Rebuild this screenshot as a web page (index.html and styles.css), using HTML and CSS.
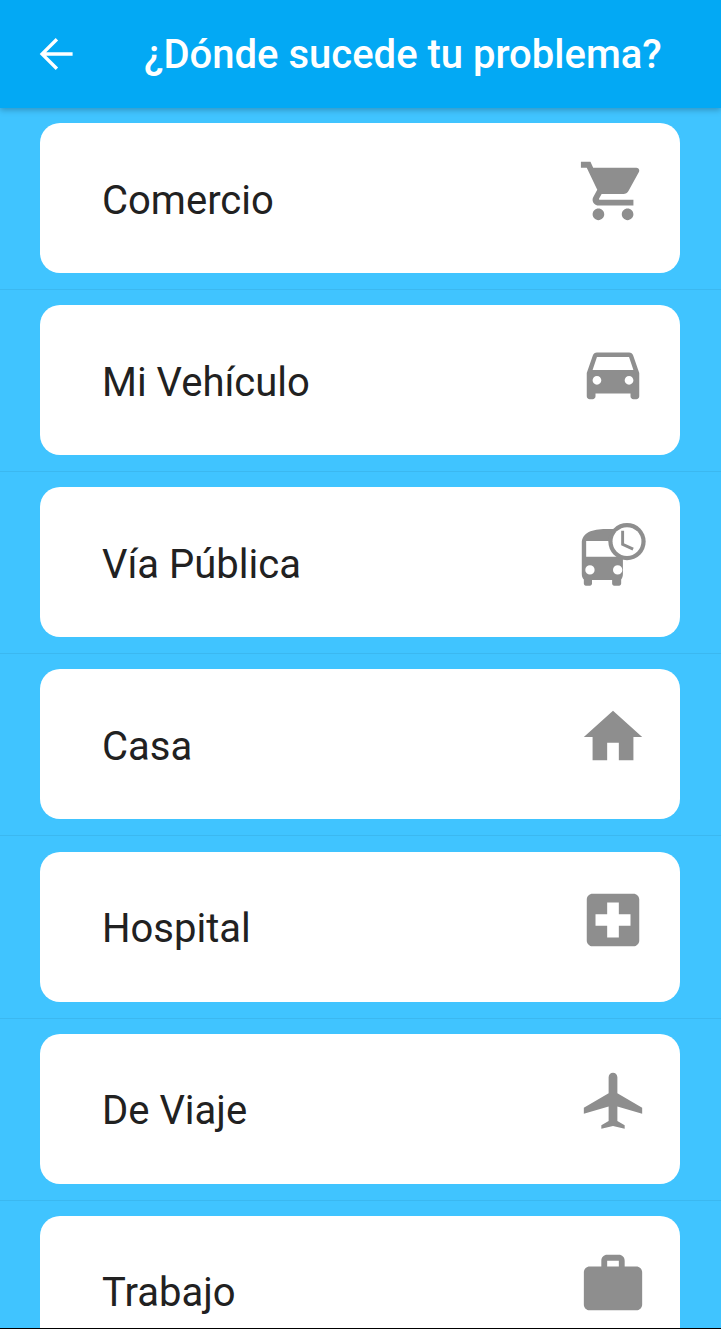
FILE: index.html
```html
<!DOCTYPE html>
<html lang="es">
<head>
    <meta charset="UTF-8">
    <meta name="viewport" content="width=device-width, initial-scale=1.0">
    <title>¿Dónde sucede tu problema?</title>
    <link rel="stylesheet" href="styles.css">
</head>
<body>
    <header class="app-bar">
        <svg class="back-icon" viewBox="0 0 24 24"><path d="M20.300 11.150H7.100l5.950-5.950L11.850 4l-8 8 8 8 1.200-1.200-5.950-5.950h13.200z"/></svg>
        <h1>¿Dónde sucede tu problema?</h1>
    </header>

    <main class="place-list">
        <div class="place-row">
            <div class="place-card">
                <span class="place-name">Comercio</span>
                <svg class="place-icon" viewBox="0 0 24 24"><path d="M7 18c-1.100 0-1.990.9-1.990 2S5.900 22 7 22s2-.9 2-2-.9-2-2-2zM1 2v2h2l3.600 7.590-1.350 2.450c-.16.28-.25.61-.25.96 0 1.100.9 2 2 2h12v-2H7.420c-.14 0-.25-.11-.25-.25l.03-.12.9-1.630h7.450c.75 0 1.410-.41 1.750-1.030l3.580-6.490c.08-.14.12-.31.12-.48 0-.55-.45-1-1-1H5.210l-.94-2H1zm16 16c-1.100 0-1.990.9-1.990 2s.89 2 1.990 2 2-.9 2-2-.9-2-2-2z"/></svg>
            </div>
        </div>
        <div class="place-row">
            <div class="place-card">
                <span class="place-name">Mi Vehículo</span>
                <svg class="place-icon" viewBox="0 0 24 24"><path d="M18.920 6.010C18.720 5.420 18.160 5 17.500 5h-11c-.66 0-1.210.42-1.420 1.010L3 12v8c0 .55.45 1 1 1h1c.55 0 1-.45 1-1v-1h12v1c0 .55.45 1 1 1h1c.55 0 1-.45 1-1v-8l-2.080-5.990zM6.500 16c-.83 0-1.500-.67-1.500-1.500S5.670 13 6.500 13s1.500.67 1.500 1.500S7.330 16 6.500 16zm11 0c-.83 0-1.500-.67-1.500-1.500s.67-1.500 1.500-1.500 1.500.67 1.500 1.500-.67 1.500-1.500 1.500zM5 11l1.500-4.500h11L19 11H5z"/></svg>
            </div>
        </div>
        <div class="place-row">
            <div class="place-card">
                <span class="place-name">Vía Pública</span>
                <svg class="place-icon" viewBox="0 0 24 24">
                    <path fill-rule="evenodd" d="M1.300 8C1.300 4.300 5 3.100 9.500 3.100H13V7.200H2.800V12.600H15.400V18.500c0 .8-.3 1.500-.6 1.900v1.400c0 .4-.3.7-.7.7h-1.700c-.4 0-.7-.3-.7-.7v-1.200H4.800v1.200c0 .4-.3.7-.7.7H2.700c-.4 0-.7-.3-.7-.7v-1.400c-.4-.4-.7-1.100-.7-1.900zM4.100 15.500a1.600 1.600 0 1 0 0 3.200 1.600 1.600 0 0 0 0-3.200zm9.500 0a1.600 1.600 0 1 0 0 3.200 1.600 1.600 0 0 0 0-3.200z"/>
                    <circle cx="16.800" cy="7.400" r="6.400"/>
                    <circle class="clock-face" cx="16.800" cy="7.400" r="4.950"/>
                    <path class="clock-hands" d="M15.300 3.700v4.600l3.600 1.700"/>
                </svg>
            </div>
        </div>
        <div class="place-row">
            <div class="place-card">
                <span class="place-name">Casa</span>
                <svg class="place-icon" viewBox="0 0 24 24"><path d="M10 20v-6h4v6h5v-8h3L12 3 2 12h3v8z"/></svg>
            </div>
        </div>
        <div class="place-row">
            <div class="place-card">
                <span class="place-name">Hospital</span>
                <svg class="place-icon" viewBox="0 0 24 24"><path d="M19 3H5c-1.100 0-1.990.9-1.990 2L3 19c0 1.100.9 2 2 2h14c1.100 0 2-.9 2-2V5c0-1.100-.9-2-2-2zm-1 11h-4v4h-4v-4H6v-4h4V6h4v4h4v4z"/></svg>
            </div>
        </div>
        <div class="place-row">
            <div class="place-card">
                <span class="place-name">De Viaje</span>
                <svg class="place-icon" viewBox="0 0 24 24"><path d="M22 16v-2l-8.500-5V3.500c0-.83-.67-1.500-1.500-1.500s-1.500.67-1.500 1.500V9L2 14v2l8.500-2.500V18.500L8 20v1.200l4-1 4 1V20l-2.500-1.500v-5L22 16z"/></svg>
            </div>
        </div>
        <div class="place-row">
            <div class="place-card">
                <span class="place-name">Trabajo</span>
                <svg class="place-icon" viewBox="0 0 24 24"><path d="M20 6h-4V4c0-1.110-.89-2-2-2h-4c-1.110 0-2 .89-2 2v2H4c-1.110 0-1.990.89-1.990 2L2 19c0 1.110.89 2 2 2h16c1.110 0 2-.89 2-2V8c0-1.110-.89-2-2-2zm-6 0h-4V4h4v2z"/></svg>
            </div>
        </div>
    </main>
</body>
</html>
```

FILE: styles.css
```css
html, body {
    height: 100%;
}
body {
    margin: 0;
    overflow: hidden;
    box-sizing: border-box;
    border-bottom: 1px solid black;
    background-color: #40c4ff;
    font-family: Roboto, sans-serif;
}
.app-bar {
    position: relative;
    z-index: 1;
    display: flex;
    align-items: center;
    height: 108px;
    padding-left: 32px;
    box-sizing: border-box;
    background-color: #03a9f4;
    box-shadow: 0 2px 6px rgba(0,0,0,0.25);
}
.back-icon {
    width: 48px;
    height: 48px;
    fill: white;
}
.app-bar h1 {
    margin: 0 0 0 64px;
    color: white;
    font-size: 40px;
    font-weight: 500;
    white-space: nowrap;
}
.place-list {
    margin-top: -0.17px;
}
.place-row {
    padding: 15.17px 41px 16px 40px;
    border-bottom: 1px solid #3bb8f0;
}
.place-card {
    display: flex;
    align-items: center;
    justify-content: space-between;
    height: 150px;
    padding: 0 32px 14px 62px;
    box-sizing: border-box;
    background-color: white;
    border-radius: 20px;
}
.place-name {
    padding-top: 18px;
    color: #212121;
    font-size: 40px;
}
.place-icon {
    width: 70px;
    height: 70px;
    fill: #8e8e8e;
}
.clock-face {
    fill: white;
}
.clock-hands {
    fill: none;
    stroke: #8e8e8e;
    stroke-width: 1;
}
```
